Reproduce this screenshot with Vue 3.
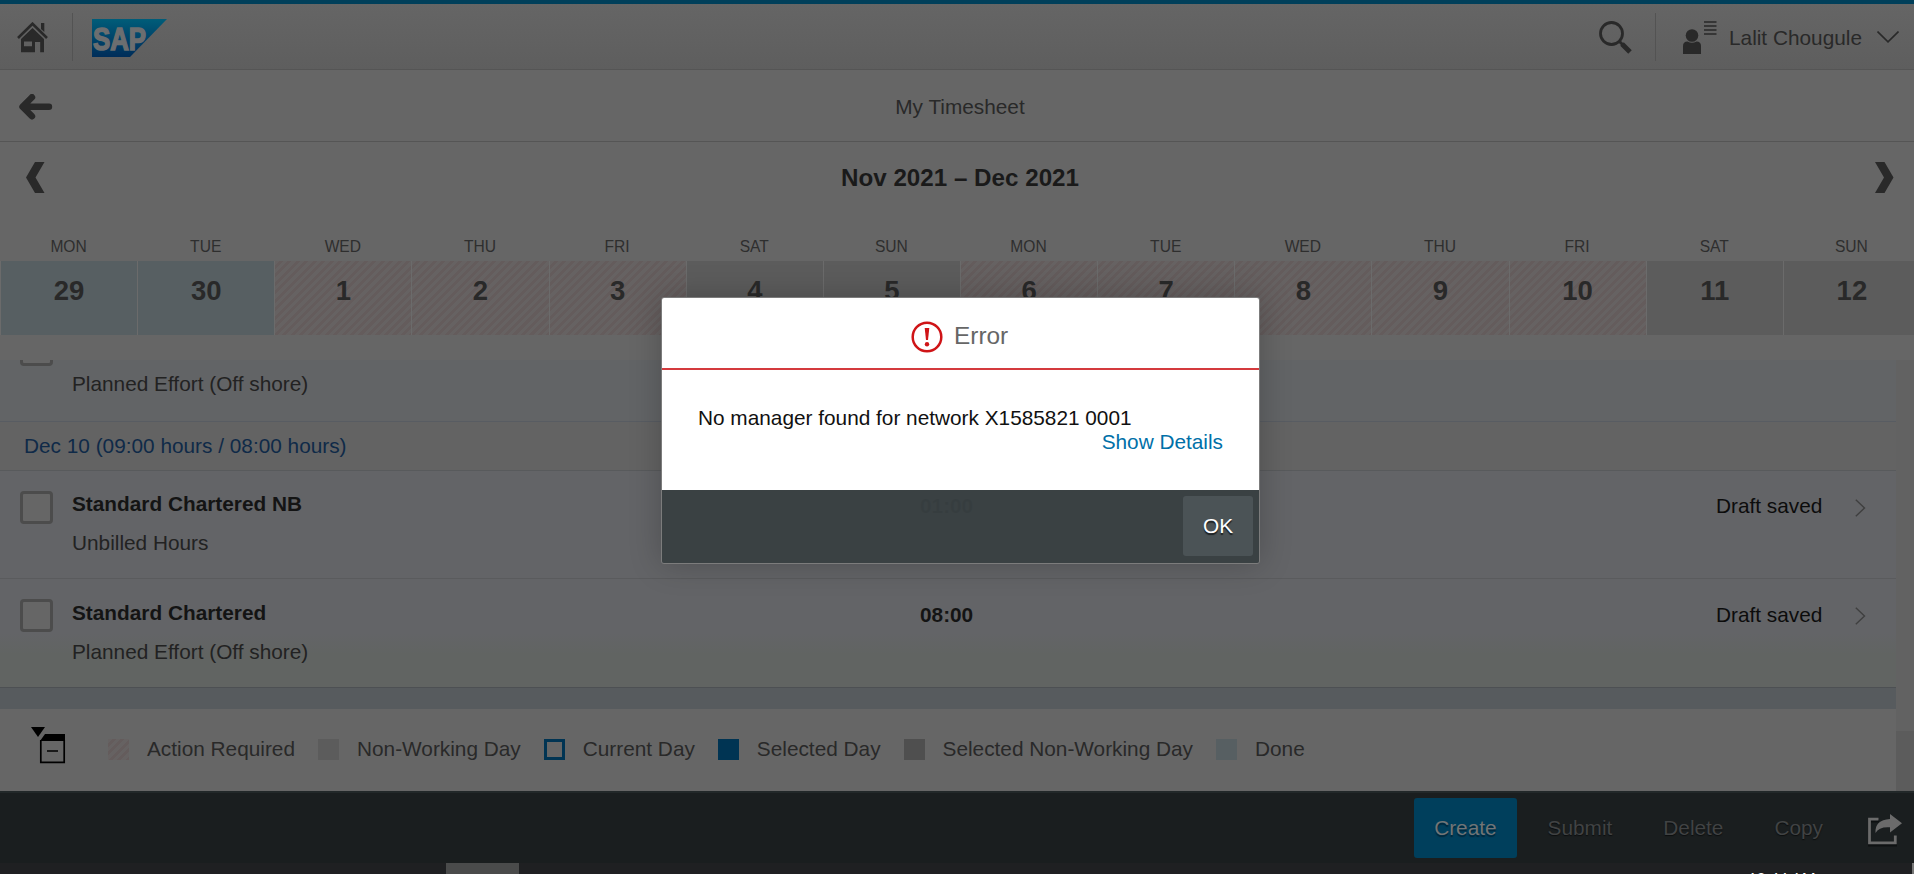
<script setup>
const days = [
  { name: 'MON', num: 29, kind: 'done' },
  { name: 'TUE', num: 30, kind: 'done' },
  { name: 'WED', num: 1, kind: 'action' },
  { name: 'THU', num: 2, kind: 'action' },
  { name: 'FRI', num: 3, kind: 'action' },
  { name: 'SAT', num: 4, kind: 'off' },
  { name: 'SUN', num: 5, kind: 'off' },
  { name: 'MON', num: 6, kind: 'action' },
  { name: 'TUE', num: 7, kind: 'action' },
  { name: 'WED', num: 8, kind: 'action' },
  { name: 'THU', num: 9, kind: 'action' },
  { name: 'FRI', num: 10, kind: 'action' },
  { name: 'SAT', num: 11, kind: 'off' },
  { name: 'SUN', num: 12, kind: 'off' },
]

const entries = [
  { title: 'Standard Chartered NB', sub: 'Unbilled Hours', time: '01:00' },
  { title: 'Standard Chartered', sub: 'Planned Effort (Off shore)', time: '08:00' },
]

const legend = [
  { label: 'Action Required', kind: 'action' },
  { label: 'Non-Working Day', kind: 'off' },
  { label: 'Current Day', kind: 'current' },
  { label: 'Selected Day', kind: 'selected' },
  { label: 'Selected Non-Working Day', kind: 'selected-off' },
  { label: 'Done', kind: 'done' },
]
</script>

<template>
  <div class="screen">
    <header class="shell">
      <svg class="home" width="32" height="31" viewBox="0 0 32 31">
        <path d="M1 16 15.500 1.700 30 16" fill="none" stroke="#292929" stroke-width="2.600" />
        <path d="M24 1h3.300v9L24 7z" fill="#292929" />
        <path fill-rule="evenodd" d="M15.500 6 27 17v13.300h-3.800V20H18v10.300H4V17zM7 19.500v4.700h8v-4.700z" fill="#292929" />
      </svg>
      <i class="sep"></i>
      <svg class="logo" width="76" height="39" viewBox="0 0 76 39">
        <defs>
          <linearGradient id="sapFill" x1="0" y1="0" x2="0" y2="1">
            <stop offset="0" stop-color="#005d79" />
            <stop offset=".5" stop-color="#00446a" />
            <stop offset="1" stop-color="#002d59" />
          </linearGradient>
        </defs>
        <path d="M0 0h75L38 38H0z" fill="url(#sapFill)" />
        <text x="1" y="30.500" textLength="53" lengthAdjust="spacingAndGlyphs" class="logo-text">SAP</text>
      </svg>
      <div class="grow"></div>
      <svg class="search" width="34" height="34" viewBox="0 0 34 34">
        <circle cx="12.500" cy="12.500" r="11" fill="none" stroke="#292929" stroke-width="2.800" />
        <path d="M20 20l4 4" stroke="#292929" stroke-width="3" />
        <path d="M23 23l8 8" stroke="#292929" stroke-width="5" />
      </svg>
      <i class="sep"></i>
      <svg class="user" width="34" height="34" viewBox="0 0 34 34">
        <circle cx="9" cy="14.500" r="6.300" fill="#292929" />
        <path d="M0 33v-8q0-4.500 4.500-4.500Q9 23 13.500 20.500 18 20.500 18 25v8z" fill="#292929" />
        <path d="M21 1h12.500M21 5h12.500M21 9h12.500M21 13h12.500" stroke="#292929" stroke-width="1.700" />
      </svg>
      <span class="user-name">Lalit Chougule</span>
      <svg class="drop" width="22" height="12" viewBox="0 0 22 12">
        <path d="M.500.500 11 10.800 21.500.500" fill="none" stroke="#292929" stroke-width="1.600" />
      </svg>
    </header>

    <div class="title-bar">
      <svg class="back" width="34" height="26" viewBox="0 0 34 26">
        <path d="M13 3.200 3.500 12.800 13 22.300M4.500 12.800H30" fill="none" stroke="#292929" stroke-width="6.400" stroke-linecap="round" stroke-linejoin="round" />
      </svg>
      <h1>My Timesheet</h1>
    </div>

    <div class="range">
      <svg width="19" height="31" viewBox="0 0 19 31"><path d="M9 0h9.500L9.500 15.500l9 15.500H9L0 15.500z" fill="#292929" /></svg>
      <h2>Nov 2021 – Dec 2021</h2>
      <svg width="19" height="31" viewBox="0 0 19 31"><path d="M0 0h9.500l9 15.500-9 15.500H0l9-15.500z" fill="#292929" /></svg>
    </div>

    <div class="days">
      <div v-for="(d, i) in days" :key="i" class="day">
        <span class="day-name">{{ d.name }}</span>
        <span class="day-cell" :class="d.kind">{{ d.num }}</span>
      </div>
    </div>

    <div class="scroll">
      <div class="content">
        <div class="partial">
          <div class="row">
            <i class="check"></i>
            <div class="desc"><b>Standard Chartered</b><span>Planned Effort (Off shore)</span></div>
          </div>
        </div>
        <div class="group">Dec 10 (09:00 hours / 08:00 hours)</div>
        <div v-for="e in entries" :key="e.title" class="row">
          <i class="check"></i>
          <div class="desc"><b>{{ e.title }}</b><span>{{ e.sub }}</span></div>
          <b class="time">{{ e.time }}</b>
          <span class="status">Draft saved</span>
          <svg class="go" width="11" height="18" viewBox="0 0 11 18"><path d="M.800.800 9.500 9 .800 17.200" fill="none" stroke="#3f3f3f" stroke-width="1.400" /></svg>
        </div>
        <div class="strip"></div>
        <div class="legend">
          <svg class="toggle" width="35" height="37" viewBox="0 0 35 37">
            <path d="M0 0h14L7 10z" fill="#000" />
            <path d="M9 14 14 7h20v7z" fill="#000" />
            <path d="M9.800 13v22.300h23.400V13M16 24h11" fill="none" stroke="#000" stroke-width="1.700" />
          </svg>
          <div v-for="l in legend" :key="l.label" class="key">
            <i class="swatch" :class="l.kind"></i><span>{{ l.label }}</span>
          </div>
        </div>
      </div>
      <div class="track"><div class="thumb"></div></div>
    </div>

    <footer class="actions">
      <span class="btn primary">Create</span>
      <span class="btn">Submit</span>
      <span class="btn">Delete</span>
      <span class="btn">Copy</span>
      <svg class="share" width="36" height="34" viewBox="0 0 36 34">
        <path d="M11 5.500H1.500v24h26V22" fill="none" stroke="#0e1112" stroke-width="3" transform="translate(0 1.500)" />
        <path d="M10.500 5.200H1.500v23.600h25.800v-7.300" fill="none" stroke="#6b6b6b" stroke-width="2.800" />
        <path d="M22 0 34 9.300 22 18.500v-5.200Q11 12.500 7.500 19 6.500 6 22 5z" fill="#6b6b6b" />
      </svg>
    </footer>

    <div class="taskbar">
      <i class="task"></i>
      <span class="clock">12:44 AM</span>
      <i class="edge"></i>
    </div>

    <div class="dialog">
      <div class="dialog-head">
        <svg width="32" height="32" viewBox="0 0 32 32">
          <circle cx="16" cy="16" r="14.300" fill="none" stroke="#cf1417" stroke-width="2.500" />
          <path d="M13.700 7h4.600l-1.300 12h-2z" fill="#cf1417" />
          <circle cx="16" cy="23.300" r="2.200" fill="#cf1417" />
        </svg>
        <span>Error</span>
      </div>
      <div class="dialog-body">
        <p>No manager found for network X1585821 0001</p>
        <a>Show Details</a>
      </div>
      <div class="dialog-foot"><span class="ok">OK</span></div>
    </div>
  </div>
</template>

<style>
body {
  overflow: hidden;
  background: #666;
}
</style>

<style scoped>
.screen {
  position: relative;
  width: 1914px;
  height: 874px;
  overflow: hidden;
  background: #666;
  font-family: "Liberation Sans", Arial, sans-serif;
  font-size: 20.8px;
  line-height: 24px;
  color: #292929;
}
.screen svg { flex: none; display: block; }

.shell {
  box-sizing: border-box;
  height: 70px;
  border-top: 4px solid #003f5a;
  border-bottom: 1px solid #555;
  background: linear-gradient(#656565, #5e5e5e);
  display: flex;
  align-items: flex-start;
  padding-left: 17px;
}
.home { margin-top: 18px; }
.sep { flex: none; width: 1px; height: 48px; margin-top: 9px; background: #535353; }
.home + .sep { margin-left: 23px; }
.logo { margin: 15px 0 0 19px; }
.logo-text {
  font-weight: 700;
  font-size: 32px;
  fill: #6c6e70;
  stroke: #6c6e70;
  stroke-width: 1.6px;
}
.grow { flex: 1; }
.search { margin: 17px 22px 0 0; }
.user { margin: 17px 0 0 27px; }
.user-name { width: 136px; margin: 22px 0 0 12px; white-space: nowrap; }
.drop { margin: 27px 15px 0 12px; }

.title-bar {
  box-sizing: border-box;
  width: 1920px;
  height: 72px;
  border-bottom: 1px solid #555;
  display: flex;
  align-items: flex-start;
  padding-left: 19px;
}
.back { margin-top: 24px; }
h1 {
  flex: 1;
  margin: 25px 53px 0 0;
  text-align: center;
  font-size: 20.8px;
  font-weight: 400;
}

.range {
  box-sizing: border-box;
  width: 1920px;
  height: 94px;
  padding: 20px 26px 0 26px;
  display: flex;
  justify-content: space-between;
  align-items: flex-start;
}
h2 { margin: 4px 0 0; font-size: 24.2px; line-height: 24px; color: #1a1a1a; }

.days {
  width: 1920px;
  height: 124px;
  display: grid;
  grid-template-columns: repeat(14, 1fr);
}
.day { display: flex; flex-direction: column; text-align: center; }
.day-name { height: 25px; line-height: 22px; font-size: 15.6px; color: #2e2e2e; }
.day-cell {
  height: 74px;
  border-left: 1px solid #6b6b6b;
  font-size: 27.5px;
  font-weight: 700;
  line-height: 60px;
  color: #292929;
}
.done { background: #575f62; }
.off { background: #5c5c5c; }
.action { background: repeating-linear-gradient(135deg, #666262 0 3px, #645c5c 3px 6px); }

.scroll { height: 431px; display: flex; }
.content { width: 1896px; flex: none; }
.track { flex: 1; background: #626262; display: flex; align-items: flex-end; }
.thumb { width: 100%; height: 60px; background: #5c5c5c; }

.partial { height: 62px; overflow: hidden; display: flex; align-items: flex-end; }
.partial .row { flex: 1; background: #626466; border-color: #585c62; }
.partial .desc { margin-top: 20px; }
.group {
  box-sizing: border-box;
  height: 48.6px;
  padding: 12px 0 0 24px;
  border-bottom: 1px solid #585a5c;
  background: #636363;
  color: #0f2a48;
}
.row {
  box-sizing: border-box;
  height: 108.7px;
  border-bottom: 1px solid #5a5b5d;
  background: #636467;
  display: flex;
  align-items: flex-start;
  flex: none;
  padding-left: 20px;
  color: #1e1e1e;
}
.row:nth-child(4) {
  background: linear-gradient(#636467 50%, #616462 70%);
  border-color: #4d5053;
}
.check {
  box-sizing: border-box;
  flex: none;
  width: 33px;
  height: 33px;
  margin-top: 20px;
  border: 3px solid #4c4c4c;
  border-radius: 4px;
  background: #666;
}
.desc {
  width: 848px;
  margin: 21.6px 0 0 19px;
  display: flex;
  flex-direction: column;
  gap: 15px;
  color: #222;
}
.desc b { color: #141414; }
.time { width: 796px; margin-top: 23.6px; color: #141414; }
.status { width: 139px; margin-top: 23.6px; color: #0c0c0c; }
.go { margin-top: 28px; }

.strip { height: 20.6px; background: #575b5e; }
.legend {
  box-sizing: border-box;
  height: 82px;
  padding: 18px 0 0 31px;
  display: flex;
  align-items: flex-start;
  background: #666;
}
.toggle { margin-right: 42px; }
.key { display: flex; margin: 10px 23px 0 0; white-space: nowrap; }
.swatch { box-sizing: border-box; width: 21px; height: 21px; margin: 2px 18px 0 0; }
.current { border: 3px solid #003453; }
.selected { background: #003453; }
.selected-off { background: #4f4f4f; }

.actions {
  box-sizing: border-box;
  height: 72px;
  border-top: 2px solid #222829;
  background: #1a1e1f;
  display: flex;
  justify-content: flex-end;
  align-items: flex-start;
  padding: 5px 10px 0 0;
}
.btn {
  box-sizing: border-box;
  height: 60px;
  padding: 0 20px;
  margin-right: 11px;
  line-height: 60px;
  color: #414344;
  text-shadow: 0 1px 1px #0c0e0f;
}
.primary { background: #003f5c; border-radius: 3px; color: #727576; text-shadow: 0 2px 1px #00263a; }
.share { margin: 16px 0 0 14px; }

.taskbar { height: 11px; overflow: hidden; display: flex; background: #1f2022; }
.task { width: 73px; margin-left: 446px; background: #4a4b4b; }
.clock {
  margin: 4px 0 0 auto;
  width: 164px;
  font: 15.6px/24px "Open Sans", sans-serif;
  color: #fff;
}
.edge { width: 2px; background: #777; }

.dialog {
  position: absolute;
  left: 661px;
  top: 297px;
  box-sizing: border-box;
  width: 599px;
  height: 267px;
  border: 1px solid #7c7c7c;
  border-radius: 3px;
  box-shadow: 0 0 32px rgba(0, 0, 0, 0.22);
  overflow: hidden;
}
.dialog-head {
  box-sizing: border-box;
  height: 72px;
  border-bottom: 2px solid #d43a3d;
  background: #fff;
  display: flex;
  padding: 23px 0 0 249px;
  font-size: 24.4px;
  color: #666;
}
.dialog-head span { margin: 3px 0 0 11px; }
.dialog-body {
  box-sizing: border-box;
  height: 120px;
  padding: 36px 36px 0;
  background: #fff;
  color: #111;
  display: flex;
  flex-direction: column;
}
.dialog-body p { margin: 0; }
.dialog-body a { align-self: flex-end; color: #0070a8; }
.dialog-foot {
  height: 73px;
  background: rgba(56, 63, 66, 0.96);
  display: flex;
  justify-content: flex-end;
  padding-right: 6px;
}
.ok {
  width: 70px;
  height: 60px;
  margin-top: 6px;
  border-radius: 3px;
  background: #4b5356;
  color: #fff;
  text-align: center;
  line-height: 60px;
  text-shadow: 0 2px 1px #1b1f21;
}
</style>
